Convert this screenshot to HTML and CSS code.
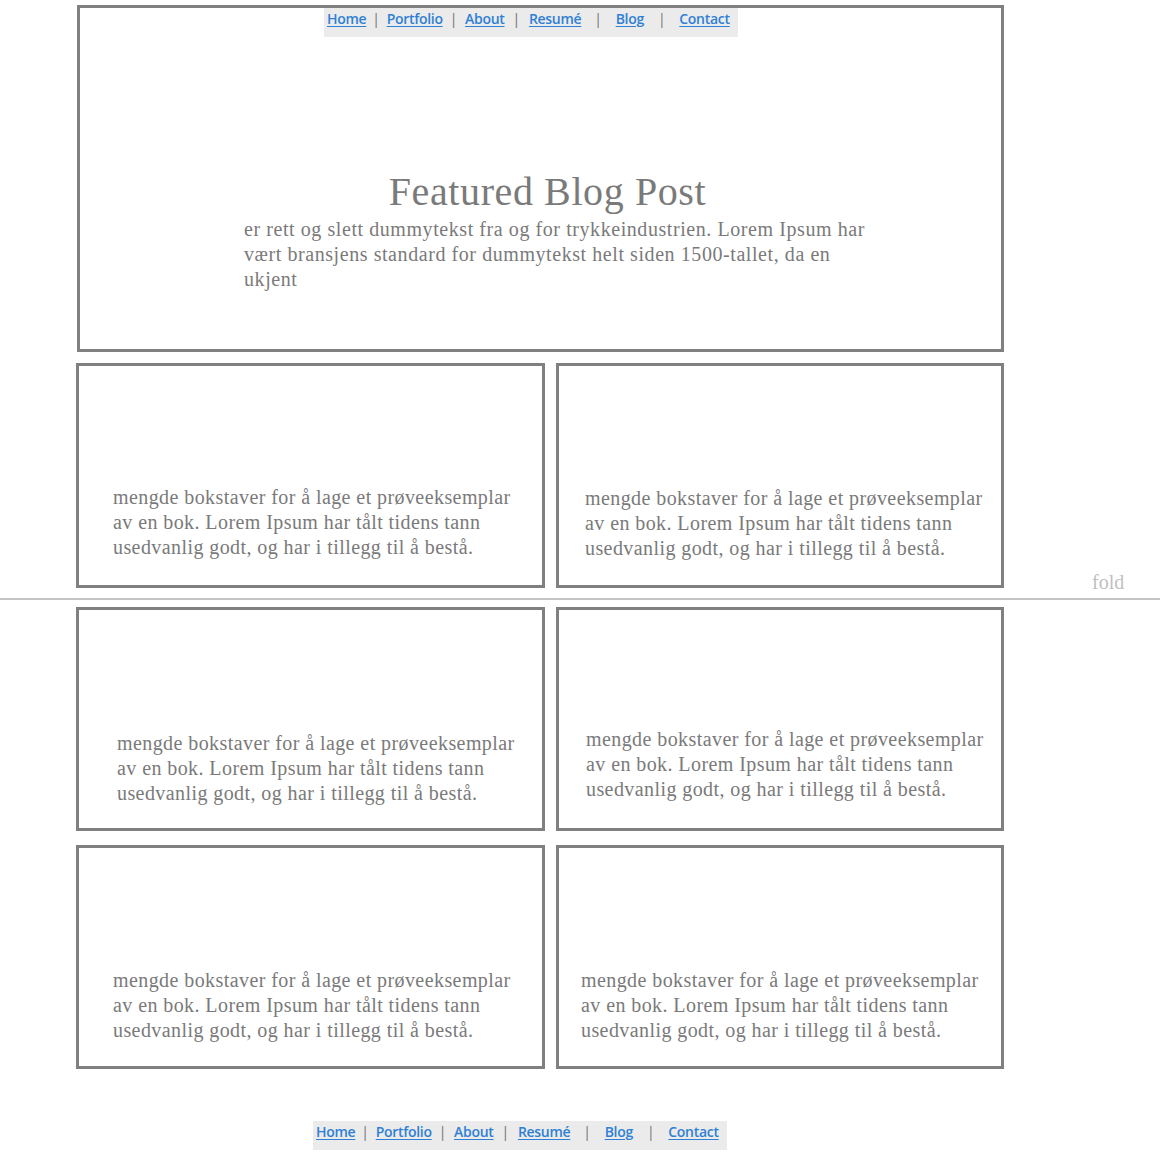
FILE: index.html
```html
<!DOCTYPE html>
<html>
<head>
<meta charset="utf-8">
<link rel="stylesheet" href="styles.css">
</head>
<body>
<div class="page">
  <section class="featured">
    <nav class="nav nav-top">
      <a href="#">Home</a><span class="sep s1">|</span><a href="#">Portfolio</a><span class="sep s2">|</span><a href="#">About</a><span class="sep s3">|</span><a href="#" class="resume">Resumé</a><span class="sep s4">|</span><a href="#">Blog</a><span class="sep s5">|</span><a href="#">Contact</a>
    </nav>
    <h1 class="title">Featured Blog Post</h1>
    <p class="lead">er rett og slett dummytekst fra og for trykkeindustrien. Lorem Ipsum har<br>vært bransjens standard for dummytekst helt siden 1500-tallet, da en<br>ukjent</p>
  </section>

  <div class="row row1">
    <div class="card left"><p class="ctext c1">mengde bokstaver for å lage et prøveeksemplar<br>av en bok. Lorem Ipsum har tålt tidens tann<br>usedvanlig godt, og har i tillegg til å bestå.</p></div>
    <div class="card right"><p class="ctext c2">mengde bokstaver for å lage et prøveeksemplar<br>av en bok. Lorem Ipsum har tålt tidens tann<br>usedvanlig godt, og har i tillegg til å bestå.</p></div>
  </div>
  <div class="row row2">
    <div class="card left"><p class="ctext c3">mengde bokstaver for å lage et prøveeksemplar<br>av en bok. Lorem Ipsum har tålt tidens tann<br>usedvanlig godt, og har i tillegg til å bestå.</p></div>
    <div class="card right"><p class="ctext c4">mengde bokstaver for å lage et prøveeksemplar<br>av en bok. Lorem Ipsum har tålt tidens tann<br>usedvanlig godt, og har i tillegg til å bestå.</p></div>
  </div>
  <div class="row row3">
    <div class="card left"><p class="ctext c5">mengde bokstaver for å lage et prøveeksemplar<br>av en bok. Lorem Ipsum har tålt tidens tann<br>usedvanlig godt, og har i tillegg til å bestå.</p></div>
    <div class="card right"><p class="ctext c6">mengde bokstaver for å lage et prøveeksemplar<br>av en bok. Lorem Ipsum har tålt tidens tann<br>usedvanlig godt, og har i tillegg til å bestå.</p></div>
  </div>

  <nav class="nav nav-bottom">
    <a href="#">Home</a><span class="sep s1">|</span><a href="#">Portfolio</a><span class="sep s2">|</span><a href="#">About</a><span class="sep s3">|</span><a href="#" class="resume">Resumé</a><span class="sep s4">|</span><a href="#">Blog</a><span class="sep s5">|</span><a href="#">Contact</a>
  </nav>
</div>
<div class="fold-line"></div>
<div class="fold-label">fold</div>
</body>
</html>
```

FILE: styles.css
```css
html, body {
  margin: 0;
  padding: 0;
  background: #ffffff;
}
body {
  font-family: "Liberation Serif", "DejaVu Serif", serif;
  color: #7a7a7a;
  position: relative;
  width: 1160px;
  height: 1176px;
  overflow: hidden;
}
.page {
  padding-top: 5px;
  margin-left: 76px;
  width: 928px;
}
.featured {
  margin-left: 1px;
  width: 927px;
  height: 347px;
  box-sizing: border-box;
  border: 3px solid #808080;
}
.nav {
  display: flex;
  align-items: center;
  width: 414px;
  height: 29px;
  box-sizing: border-box;
  background: #ebebeb;
  font-family: "Open Sans", "DejaVu Sans", sans-serif;
  font-size: 14px;
  font-weight: 600;
  padding-left: 3px;
  padding-bottom: 8px;
  letter-spacing: -0.3px;
  white-space: nowrap;
}
.nav a {
  color: #2f80d4;
  text-decoration: underline;
  text-underline-offset: 2px;
}
.nav .sep {
  color: #707070;
  font-weight: 400;
  padding: 0 7px 0 6px;
}
.nav .s2 { padding: 0 8px 0 7px; }
.nav .s3 { padding: 0 9px 0 8px; }
.nav .s4 { padding: 0 14px 0 13px; }
.nav .s5 { padding: 0 14px 0 14px; }
.nav-top {
  margin-left: 244px;
}
.title {
  margin: 133px 0 0 0;
  padding-left: 14px;
  text-align: center;
  font-size: 40px;
  font-weight: 400;
  letter-spacing: 0.6px;
  line-height: 44px;
  color: #7a7a7a;
}
.lead {
  margin: 3px 0 0 164px;
  font-size: 20px;
  letter-spacing: 0.57px;
  line-height: 25px;
}
.row {
  display: grid;
  grid-template-columns: 469px 448px;
  column-gap: 11px;
}
.row1 { margin-top: 11px; height: 225px; }
.row2 { margin-top: 19px; height: 224px; }
.row3 { margin-top: 14px; height: 224px; }
.card {
  box-sizing: border-box;
  border: 3px solid #808080;
  height: 100%;
}
.ctext {
  margin: 0;
  font-size: 20px;
  letter-spacing: 0.42px;
  line-height: 25px;
  padding-top: 119px;
  padding-left: 34px;
  white-space: nowrap;
}
.c2 { padding-top: 120px; padding-left: 26px; }
.c3 { padding-top: 121px; padding-left: 38px; }
.c4 { padding-top: 117px; padding-left: 27px; }
.c5 { padding-top: 120px; padding-left: 34px; }
.c6 { padding-top: 120px; padding-left: 22px; }
.nav-bottom {
  margin-top: 52px;
  margin-left: 237px;
}
.fold-line {
  position: absolute;
  left: 0;
  top: 598px;
  width: 1160px;
  height: 2px;
  background: #c4c4c4;
}
.fold-label {
  position: absolute;
  left: 1092px;
  top: 570px;
  font-size: 20px;
  line-height: 24px;
  color: #c0c0c0;
}
```
